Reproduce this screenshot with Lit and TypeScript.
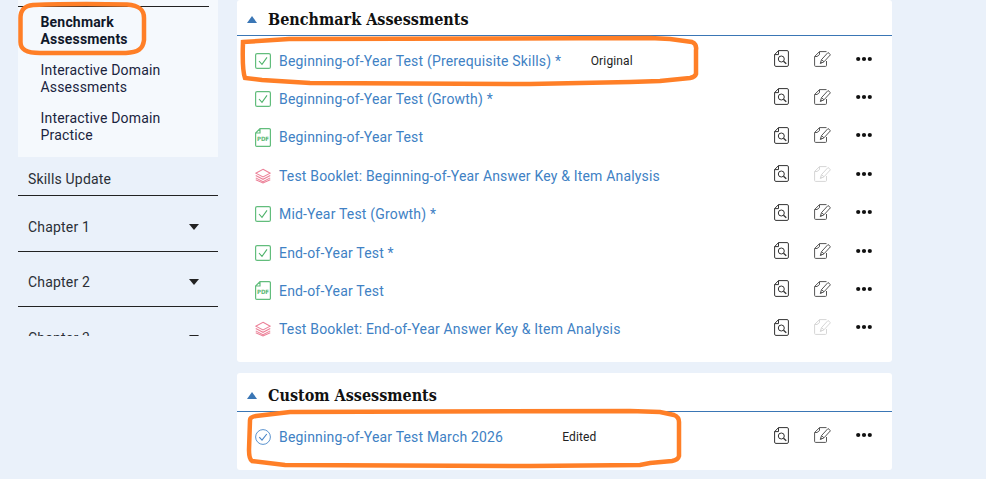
import { LitElement, html, css, svg } from "lit";
import { customElement } from "lit/decorators.js";

type Kind = "check" | "pdf" | "stack" | "circle";
interface Row { kind: Kind; title: string; status?: string; gap?: number; editOff?: boolean }

const bench: Row[] = [
  { kind: "check", title: "Beginning-of-Year Test (Prerequisite Skills) *", status: "Original", gap: 29.5 },
  { kind: "check", title: "Beginning-of-Year Test (Growth) *" },
  { kind: "pdf", title: "Beginning-of-Year Test" },
  { kind: "stack", title: "Test Booklet: Beginning-of-Year Answer Key & Item Analysis", editOff: true },
  { kind: "check", title: "Mid-Year Test (Growth) *" },
  { kind: "check", title: "End-of-Year Test *" },
  { kind: "pdf", title: "End-of-Year Test" },
  { kind: "stack", title: "Test Booklet: End-of-Year Answer Key & Item Analysis", editOff: true },
];
const custom: Row[] = [
  { kind: "circle", title: "Beginning-of-Year Test March 2026", status: "Edited", gap: 59 },
];

const kindIcon = (k: Kind) => {
  if (k === "check")
    return html`<svg class="ico" viewBox="0 0 16 16" fill="none"><rect x=".6" y=".6" width="14.8" height="14.8" rx="1.5" stroke="#62bd7c" stroke-width="1.2"/><path d="M4 8l3 3.4L12 4.4" stroke="#4fb36b" stroke-width="1.1"/></svg>`;
  if (k === "pdf")
    return html`<svg class="ico tall" viewBox="0 0 16 19" fill="none"><path d="M5 .6h9.2a1.2 1.2 0 011.2 1.2v15.400a1.2 1.2 0 01-1.2 1.2H1.800a1.2 1.2 0 01-1.2-1.2V5zM5 .6V5H.6" stroke="#62bd7c" stroke-width="1.2"/><text x="8" y="13" text-anchor="middle" class="pdf">PDF</text></svg>`;
  if (k === "stack")
    return html`<svg class="ico" viewBox="0 0 17 16" fill="none" stroke="#ec8098" stroke-width="1.100"><path d="M8.500 .8L16.200 5l-7.700 4L.8 5z"/><path d="M.8 7.500l7.700 4 7.700-4M.8 10l7.700 4 7.700-4M.8 12l7.700 3.400 7.700-3.400"/></svg>`;
  return html`<svg class="ico" viewBox="0 0 16 16" fill="none"><circle cx="8" cy="8" r="7.400" stroke="#5b93cf" stroke-width="1"/><path d="M4.300 8.200l2.700 3L11.800 5" stroke="#4a86c8" stroke-width="1.100"/></svg>`;
};

const previewIcon = html`<svg class="act" width="15" height="17" viewBox="0 0 15 17" fill="none" stroke="#333"><path d="M4.500.6h8.600a1.300 1.300 0 011.300 1.300v13.200a1.300 1.300 0 01-1.300 1.300H1.900a1.300 1.300 0 01-1.300-1.300V4.600zM4.500.6v4H.6" stroke-width="1"/><circle cx="7.300" cy="9" r="3" stroke-width="1"/><path d="M9.500 11.200l2.800 2.600" stroke-width="1.300"/></svg>`;

const editIcon = (off?: boolean) => html`<svg class="act" width="17" height="16" viewBox="0 0 17 16" fill="none" stroke=${off ? "#d6d6d6" : "#555"}><path d="M12.500 10v4.400a1 1 0 01-1 1H1.600a1 1 0 01-1-1V5.500L5.500.6H12.500" stroke-width="1"/><path d="M5.500.6v3L3 5.500H.8" stroke-width="1"/><path d="M14 1.500l2.500 2.200L10 10.800 7.500 8.600z" stroke-width="1"/><path d="M7.500 8.600L6.300 12.500l3.700-1.700" stroke-width="1"/><path d="M6.800 10.500l-.5 2 2-.8z" fill=${off ? "#d6d6d6" : "#555"} stroke="none"/></svg>`;

const dots = html`<svg class="act" width="16" height="6" viewBox="0 0 16 6" fill="#111"><circle cx="2.200" cy="3" r="2.100"/><circle cx="8" cy="3" r="2.100"/><circle cx="13.800" cy="3" r="2.100"/></svg>`;

const annotations = svg`
  <path d="M33 5 C60 4 100 4 127 4.500 C140 5.500 144 10 144 18 L144 40 C143 49 138 52.500 126 53 L40 53 C27 53 20.500 50 20.500 42 L20.500 18 C20.500 10 24 6 33 5Z"/>
  <path d="M243 42 L289 39 L650 38 L670 39 L692 42 Q697 44 696 50 L696 74 Q695 77 690 78 L660 81 L630 82 L530 84 L310 83 L262 80 L245 78 Q242 70 243 42Z"/>
  <path d="M250 420 Q250 417 256 416 L290 412 L630 411 L660 412 L674 415 Q679 417 679 422 L679 456 Q678 460 672 461 L650 463 L640 465 L530 466 L285 465 L252 461 Q249 459 249 450Z"/>
`;

@customElement("app-root")
export class AppRoot extends LitElement {
  static styles = css`
    :host { display: flex; position: relative; width: 986px; height: 479px; overflow: hidden; background: #eaf1fa; font-family: Roboto, "Liberation Sans", sans-serif; font-size: 14px; color: #222; padding-left: 18px; box-sizing: border-box; gap: 19px; letter-spacing: .18px; }
    .side { width: 200px; height: 336px; overflow: hidden; flex: none; }
    .panel { height: 157px; box-sizing: border-box; background: #f5f9fd; padding-top: 6px; }
    .rule { height: 1px; background: #222; margin-right: 9px; margin-bottom: 7px; }
    .sub { display: flex; flex-direction: column; gap: 14px; padding-left: 22.500px; line-height: 17px; color: #1a2440; }
    .sub .on { font-weight: 700; color: #10182a; }
    .nav { display: flex; align-items: center; justify-content: space-between; padding: 0 19px 0 10px; border-bottom: 1px solid #222; box-sizing: border-box; color: #2a2f36; }
    .skills { height: 39px; padding-top: 6px; }
    .ch { height: 55.500px; padding-top: 7px; }
    .caret { width: 0; height: 0; border-left: 5px solid transparent; border-right: 5px solid transparent; border-top: 6px solid #222; }
    .main { width: 655px; flex: none; display: flex; flex-direction: column; gap: 11px; }
    .card { background: #fff; border-radius: 3px; }
    .card.a { height: 362px; box-sizing: border-box; }
    .card.b { height: 97px; box-sizing: border-box; }
    .head { display: flex; align-items: center; gap: 10px; padding-left: 10px; height: 36px; box-sizing: border-box; border-bottom: 1px solid #3a76b5; }
    .card.a .head { padding-top: 4px; }
    .card.b .head { height: 39px; padding-top: 7px; }
    .tri { width: 0; height: 0; border-left: 5.500px solid transparent; border-right: 5.500px solid transparent; border-bottom: 7px solid #3a76b5; }
    h2 { margin: 0; font: 700 16px "DejaVu Serif Condensed", "DejaVu Serif", serif; color: #111; letter-spacing: 0; padding-left: 1px; }
    .rows { padding-top: 5.400px; }
    .card.b .rows { padding-top: 6px; }
    .row { display: flex; align-items: center; height: 38.400px; padding: 0 20px 0 18px; }
    .ico { width: 16px; height: 16px; flex: none; margin-right: 8px; }
    .ico.tall { height: 19px; }
    .pdf { font: 700 6px "DejaVu Sans Condensed", "DejaVu Sans", sans-serif; fill: #5cb874; letter-spacing: 0; }
    .title { color: #4081c4; white-space: nowrap; }
    .status { font-size: 12px; letter-spacing: .15px; color: #222; }
    .acts { margin-left: auto; display: flex; align-items: center; width: 98px; justify-content: space-between; margin-top: -4px; }
    .over { position: absolute; left: 0; top: 0; pointer-events: none; }
    .over path { fill: none; stroke: #ff7f27; stroke-width: 4.500; }
  `;

  private row(r: Row) {
    return html`<div class="row">
      ${kindIcon(r.kind)}
      <span class="title">${r.title}</span>
      ${r.status ? html`<span class="status" style="margin-left:${r.gap}px">${r.status}</span>` : ""}
      <div class="acts">${previewIcon}${editIcon(r.editOff)}${dots}</div>
    </div>`;
  }

  render() {
    return html`
      <aside class="side">
        <div class="panel">
          <div class="rule"></div>
          <div class="sub">
            <div class="on">Benchmark<br />Assessments</div>
            <div>Interactive Domain<br />Assessments</div>
            <div>Interactive Domain<br />Practice</div>
          </div>
        </div>
        <div class="nav skills">Skills Update</div>
        <div class="nav ch"><span>Chapter 1</span><i class="caret"></i></div>
        <div class="nav ch"><span>Chapter 2</span><i class="caret"></i></div>
        <div class="nav ch"><span>Chapter 3</span><i class="caret"></i></div>
      </aside>
      <main class="main">
        <section class="card a">
          <div class="head"><i class="tri"></i><h2>Benchmark Assessments</h2></div>
          <div class="rows">${bench.map((r) => this.row(r))}</div>
        </section>
        <section class="card b">
          <div class="head"><i class="tri"></i><h2>Custom Assessments</h2></div>
          <div class="rows">${custom.map((r) => this.row(r))}</div>
        </section>
      </main>
      <svg class="over" width="986" height="479" viewBox="0 0 986 479">${annotations}</svg>
    `;
  }
}
